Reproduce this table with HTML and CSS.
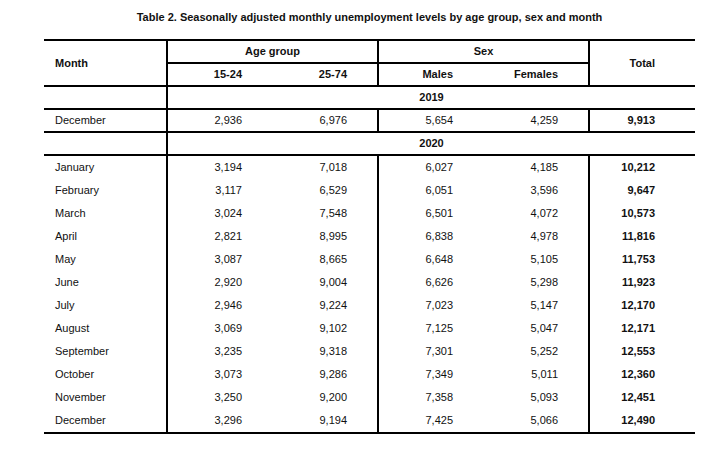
FILE: index.html
```html
<!DOCTYPE html>
<html lang="en">
<head>
<meta charset="utf-8">
<title>Table 2</title>
<link rel="stylesheet" href="styles.css">
</head>
<body>
<div class="page">
  <h1 class="title">Table 2. Seasonally adjusted monthly unemployment levels by age group, sex and month</h1>
  <table class="ut">
    <colgroup>
      <col class="c-month">
      <col class="c-a">
      <col class="c-b">
      <col class="c-a">
      <col class="c-b">
      <col class="c-b">
    </colgroup>
    <thead>
      <tr class="hr1">
        <th rowspan="2" class="month-h vr">Month</th>
        <th colspan="2" class="grp vr">Age group</th>
        <th colspan="2" class="grp vr">Sex</th>
        <th rowspan="2" class="total-h">Total</th>
      </tr>
      <tr class="hr2">
        <th class="num">15-24</th>
        <th class="num vr">25-74</th>
        <th class="num">Males</th>
        <th class="num vr">Females</th>
      </tr>
    </thead>
    <tbody class="sect">
      <tr class="year">
        <td class="vr"></td>
        <th colspan="5">2019</th>
      </tr>
      <tr class="single">
        <td class="month vr">December</td>
        <td class="num">2,936</td>
        <td class="num vr">6,976</td>
        <td class="num">5,654</td>
        <td class="num vr">4,259</td>
        <td class="tot">9,913</td>
      </tr>
      <tr class="year">
        <td class="vr"></td>
        <th colspan="5">2020</th>
      </tr>
    </tbody>
    <tbody class="data">
      <tr><td class="month vr">January</td><td class="num">3,194</td><td class="num vr">7,018</td><td class="num">6,027</td><td class="num vr">4,185</td><td class="tot">10,212</td></tr>
      <tr><td class="month vr">February</td><td class="num">3,117</td><td class="num vr">6,529</td><td class="num">6,051</td><td class="num vr">3,596</td><td class="tot">9,647</td></tr>
      <tr><td class="month vr">March</td><td class="num">3,024</td><td class="num vr">7,548</td><td class="num">6,501</td><td class="num vr">4,072</td><td class="tot">10,573</td></tr>
      <tr><td class="month vr">April</td><td class="num">2,821</td><td class="num vr">8,995</td><td class="num">6,838</td><td class="num vr">4,978</td><td class="tot">11,816</td></tr>
      <tr><td class="month vr">May</td><td class="num">3,087</td><td class="num vr">8,665</td><td class="num">6,648</td><td class="num vr">5,105</td><td class="tot">11,753</td></tr>
      <tr><td class="month vr">June</td><td class="num">2,920</td><td class="num vr">9,004</td><td class="num">6,626</td><td class="num vr">5,298</td><td class="tot">11,923</td></tr>
      <tr><td class="month vr">July</td><td class="num">2,946</td><td class="num vr">9,224</td><td class="num">7,023</td><td class="num vr">5,147</td><td class="tot">12,170</td></tr>
      <tr><td class="month vr">August</td><td class="num">3,069</td><td class="num vr">9,102</td><td class="num">7,125</td><td class="num vr">5,047</td><td class="tot">12,171</td></tr>
      <tr><td class="month vr">September</td><td class="num">3,235</td><td class="num vr">9,318</td><td class="num">7,301</td><td class="num vr">5,252</td><td class="tot">12,553</td></tr>
      <tr><td class="month vr">October</td><td class="num">3,073</td><td class="num vr">9,286</td><td class="num">7,349</td><td class="num vr">5,011</td><td class="tot">12,360</td></tr>
      <tr><td class="month vr">November</td><td class="num">3,250</td><td class="num vr">9,200</td><td class="num">7,358</td><td class="num vr">5,093</td><td class="tot">12,451</td></tr>
      <tr><td class="month vr">December</td><td class="num">3,296</td><td class="num vr">9,194</td><td class="num">7,425</td><td class="num vr">5,066</td><td class="tot">12,490</td></tr>
    </tbody>
  </table>
</div>
</body>
</html>
```

FILE: styles.css
```css
html, body {
  margin: 0;
  padding: 0;
  background: #fff;
}

body {
  font-family: "Liberation Sans", Arial, sans-serif;
  font-size: 11px;
  color: #111;
}

.page {
  padding: 11px 0 0 44px;
  width: 651px;
}

.title {
  margin: 0;
  font-size: 11px;
  line-height: 13px;
  font-weight: bold;
  text-align: center;
}

.ut {
  margin-top: 15px;
  border-collapse: collapse;
  table-layout: fixed;
  width: 651px;
  border-top: 2px solid #000;
  border-bottom: 2px solid #000;
}

.c-month { width: 123px; }
.c-a { width: 105px; }
.c-b { width: 106px; }

.ut th,
.ut td {
  padding: 0;
  height: 21px;
  line-height: 13px;
  font-weight: normal;
  vertical-align: middle;
  white-space: nowrap;
}

.ut th {
  font-weight: bold;
}

.ut .vr {
  border-right: 2px solid #000;
}

.ut .month-h,
.ut .month {
  text-align: left;
  padding-left: 11px;
}

.ut .grp {
  text-align: center;
  border-bottom: 2px solid #000;
}

.ut .num {
  text-align: right;
  padding-right: 30px;
}

.ut .total-h,
.ut .tot {
  text-align: right;
  padding-right: 40px;
}

.ut .tot {
  font-weight: bold;
}

.hr2 th {
  border-bottom: 2px solid #000;
}

.hr1 .month-h,
.hr1 .total-h {
  border-bottom: 2px solid #000;
}

.year th {
  text-align: center;
}

.sect tr td,
.sect tr th {
  border-bottom: 2px solid #000;
}

.data td {
  height: 23px;
}
```
